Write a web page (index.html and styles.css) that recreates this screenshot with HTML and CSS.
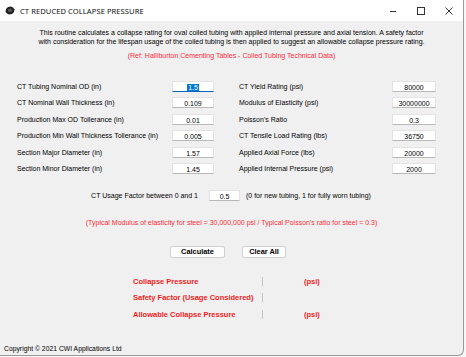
FILE: index.html
```html
<!DOCTYPE html>
<html lang="en">
<head>
    <meta charset="UTF-8">
    <title>CT Reduced Collapse Pressure</title>
    <link rel="stylesheet" href="styles.css">
</head>
<body>
    <div class="window">
        <div class="titlebar">
            <svg class="app-icon" width="10" height="9" viewBox="0 0 10 9">
                <path d="M1 3 L3 1 L6 0.5 L8 1.5 L9.5 3.5 L9 6 L7 8 L4 8.5 L2 7.5 L0.5 6 Z" fill="#222"/>
                <path d="M3 3 L6 2.5 L7.5 4 L6 6 L3.5 6 Z" fill="#555"/>
            </svg>
            <span class="title">CT REDUCED COLLAPSE PRESSURE</span>
            <div class="controls">
                <svg width="10" height="10" viewBox="0 0 10 10"><line x1="2" y1="5.5" x2="8" y2="5.5" stroke="#333" stroke-width="1"/></svg>
                <svg width="10" height="10" viewBox="0 0 10 10"><rect x="1.5" y="1.5" width="7" height="7" fill="none" stroke="#333" stroke-width="1"/></svg>
                <svg width="10" height="10" viewBox="0 0 10 10"><path d="M1.5 1.5 L8.5 8.5 M8.5 1.5 L1.5 8.5" stroke="#333" stroke-width="1"/></svg>
            </div>
        </div>

        <div class="content">
            <p class="intro">
                This routine calculates a collapse rating for oval coiled tubing with applied internal pressure and axial tension. A safety factor<br>
                with consideration for the lifespan usage of the coiled tubing is then applied to suggest an allowable collapse pressure rating.
            </p>
            <p class="ref">(Ref: Halliburton Cementing Tables - Coiled Tubing Technical Data)</p>

            <div class="inputs">
                <label>CT Tubing Nominal OD (in)</label>
                <div class="box focused"><span class="selected">1.5</span></div>
                <label class="right">CT Yield Rating (psi)</label>
                <div class="box">80000</div>

                <label>CT Nominal Wall Thickness (in)</label>
                <div class="box">0.109</div>
                <label class="right">Modulus of Elasticity (psi)</label>
                <div class="box">30000000</div>

                <label>Production Max OD Tollerance (in)</label>
                <div class="box">0.01</div>
                <label class="right">Poisson's Ratio</label>
                <div class="box">0.3</div>

                <label>Production Min Wall Thickness Tollerance (in)</label>
                <div class="box">0.005</div>
                <label class="right">CT Tensile Load Rating (lbs)</label>
                <div class="box">36750</div>

                <label>Section Major Diameter (in)</label>
                <div class="box">1.57</div>
                <label class="right">Applied Axial Force (lbs)</label>
                <div class="box">20000</div>

                <label>Section Minor Diameter (in)</label>
                <div class="box">1.45</div>
                <label class="right">Applied Internal Pressure (psi)</label>
                <div class="box">2000</div>
            </div>

            <div class="usage">
                <label class="usage-label">CT Usage Factor between 0 and 1</label>
                <div class="box usage-box">0.5</div>
                <span class="hint">(0 for new tubing, 1 for fully worn tubing)</span>
            </div>

            <p class="ref typical">(Typical Modulus of elasticity for steel = 30,000,000 psi / Typical Poisson's ratio for steel = 0.3)</p>

            <div class="buttons">
                <button class="btn calc">Calculate</button>
                <button class="btn clear">Clear All</button>
            </div>

            <div class="results">
                <div class="result-row">
                    <span class="result-label">Collapse Pressure</span>
                    <span class="result-value"></span>
                    <span class="unit">(psi)</span>
                </div>
                <div class="result-row">
                    <span class="result-label">Safety Factor (Usage Considered)</span>
                    <span class="result-value"></span>
                    <span class="unit"></span>
                </div>
                <div class="result-row">
                    <span class="result-label">Allowable Collapse Pressure</span>
                    <span class="result-value"></span>
                    <span class="unit">(psi)</span>
                </div>
            </div>
        </div>

        <div class="statusbar">Copyright &copy; 2021 CWI Applications Ltd</div>
    </div>
</body>
</html>
```

FILE: styles.css
```css
body {
    margin: 0;
    background-color: #f7f7f7;
    font-family: "Liberation Sans", Arial, sans-serif;
    font-size: 7px;
    color: #000;
}
.window {
    width: 463px;
    height: 355px;
    background-color: #f0f0f0;
    border-right: 1px solid #9a9a9a;
    border-bottom: 1px solid #9a9a9a;
    border-bottom-right-radius: 6px;
    display: flex;
    flex-direction: column;
    overflow: hidden;
}
.titlebar {
    height: 21px;
    background: #fff;
    display: flex;
    align-items: center;
    padding-left: 5px;
    flex-shrink: 0;
}
.app-icon {
    margin-right: 5px;
}
.title {
    font-family: "Noto Sans", "Liberation Sans", sans-serif;
    font-size: 7.6px;
    color: #111;
    letter-spacing: 0.05px;
}
.controls {
    margin-left: auto;
    display: flex;
    gap: 18px;
    padding-right: 9px;
}
.content {
    flex: 1;
    padding-top: 7px;
}
.intro {
    margin: 0;
    text-align: center;
    line-height: 9px;
}
.ref {
    margin: 5px 0 0;
    text-align: center;
    color: #ff2b3c;
    line-height: 9px;
}
.inputs {
    display: grid;
    grid-template-columns: 155px 42px 178px 44px;
    row-gap: 5.4px;
    padding-left: 17px;
    margin-top: 21px;
}
.inputs label {
    display: flex;
    align-items: center;
}
.inputs .right {
    padding-left: 25px;
}
.box {
    height: 11px;
    line-height: 11px;
    background: #fff;
    border: 1px solid #e3e3e3;
    border-bottom-color: #b8b8b8;
    box-sizing: border-box;
    text-align: center;
    font-size: 7px;
}
.box.focused {
    border-bottom: 1px solid #0067c0;
}
.selected {
    background: #0078d7;
    color: #fff;
    padding: 0 1px;
}
.usage {
    display: flex;
    align-items: center;
    margin-top: 16px;
}
.usage-label {
    width: 198px;
    text-align: right;
    margin-right: 11px;
}
.usage-box {
    width: 31px;
    margin-right: 6px;
}
.typical {
    margin-top: 17px;
}
.buttons {
    display: flex;
    gap: 17px;
    padding-left: 170px;
    margin-top: 19px;
}
.btn {
    height: 12px;
    padding: 0;
    font-family: "Liberation Sans", Arial, sans-serif;
    font-size: 7.4px;
    font-weight: bold;
    background: #fdfdfd;
    border: 1px solid #d0d0d0;
    border-radius: 2px;
    color: #000;
}
.calc {
    width: 55px;
}
.clear {
    width: 44px;
}
.results {
    display: flex;
    flex-direction: column;
    gap: 7.5px;
    margin-top: 19px;
    padding-left: 133px;
}
.result-row {
    display: flex;
    align-items: center;
    height: 9px;
    color: #f01c1c;
    font-weight: bold;
    font-size: 7.5px;
}
.result-label {
    width: 129px;
}
.result-value {
    width: 41px;
    height: 9px;
    border-left: 1px solid #c4c4c4;
}
.statusbar {
    height: 13px;
    line-height: 13px;
    padding-left: 4px;
    flex-shrink: 0;
    font-size: 6.8px;
}
```
